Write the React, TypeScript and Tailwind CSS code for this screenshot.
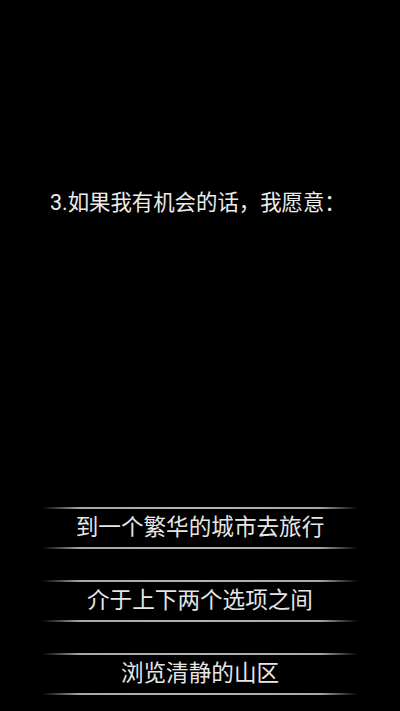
import React from 'react';

const font = { fontFamily: '"Roboto", "Noto Sans CJK SC", sans-serif' };

const options = ['到一个繁华的城市去旅行', '介于上下两个选项之间', '浏览清静的山区'];

const Line = () => (
  <div className="mx-[42px] h-[2px] bg-[linear-gradient(90deg,rgba(160,160,160,0)_0%,#a8a8a8_12%,#b4b4b4_50%,#a8a8a8_88%,rgba(160,160,160,0)_100%)]" />
);

export default function App() {
  return (
    <div className="w-[400px] h-[711px] bg-black flex flex-col overflow-hidden" style={font}>
      {/* Question */}
      <div className="pt-[188px] pl-[50px] text-[21.4px] leading-[30px] text-[#ececec]">
        3.如果我有机会的话，我愿意：
      </div>

      {/* Options */}
      <div className="mt-auto pb-[16px] flex flex-col gap-[31px]">
        {options.map((o) => (
          <button key={o} className="flex flex-col w-full cursor-pointer">
            <Line />
            <div className="h-[38px] flex items-center justify-center text-[22.6px] text-[#e6e6e6]">
              {o}
            </div>
            <Line />
          </button>
        ))}
      </div>
    </div>
  );
}
